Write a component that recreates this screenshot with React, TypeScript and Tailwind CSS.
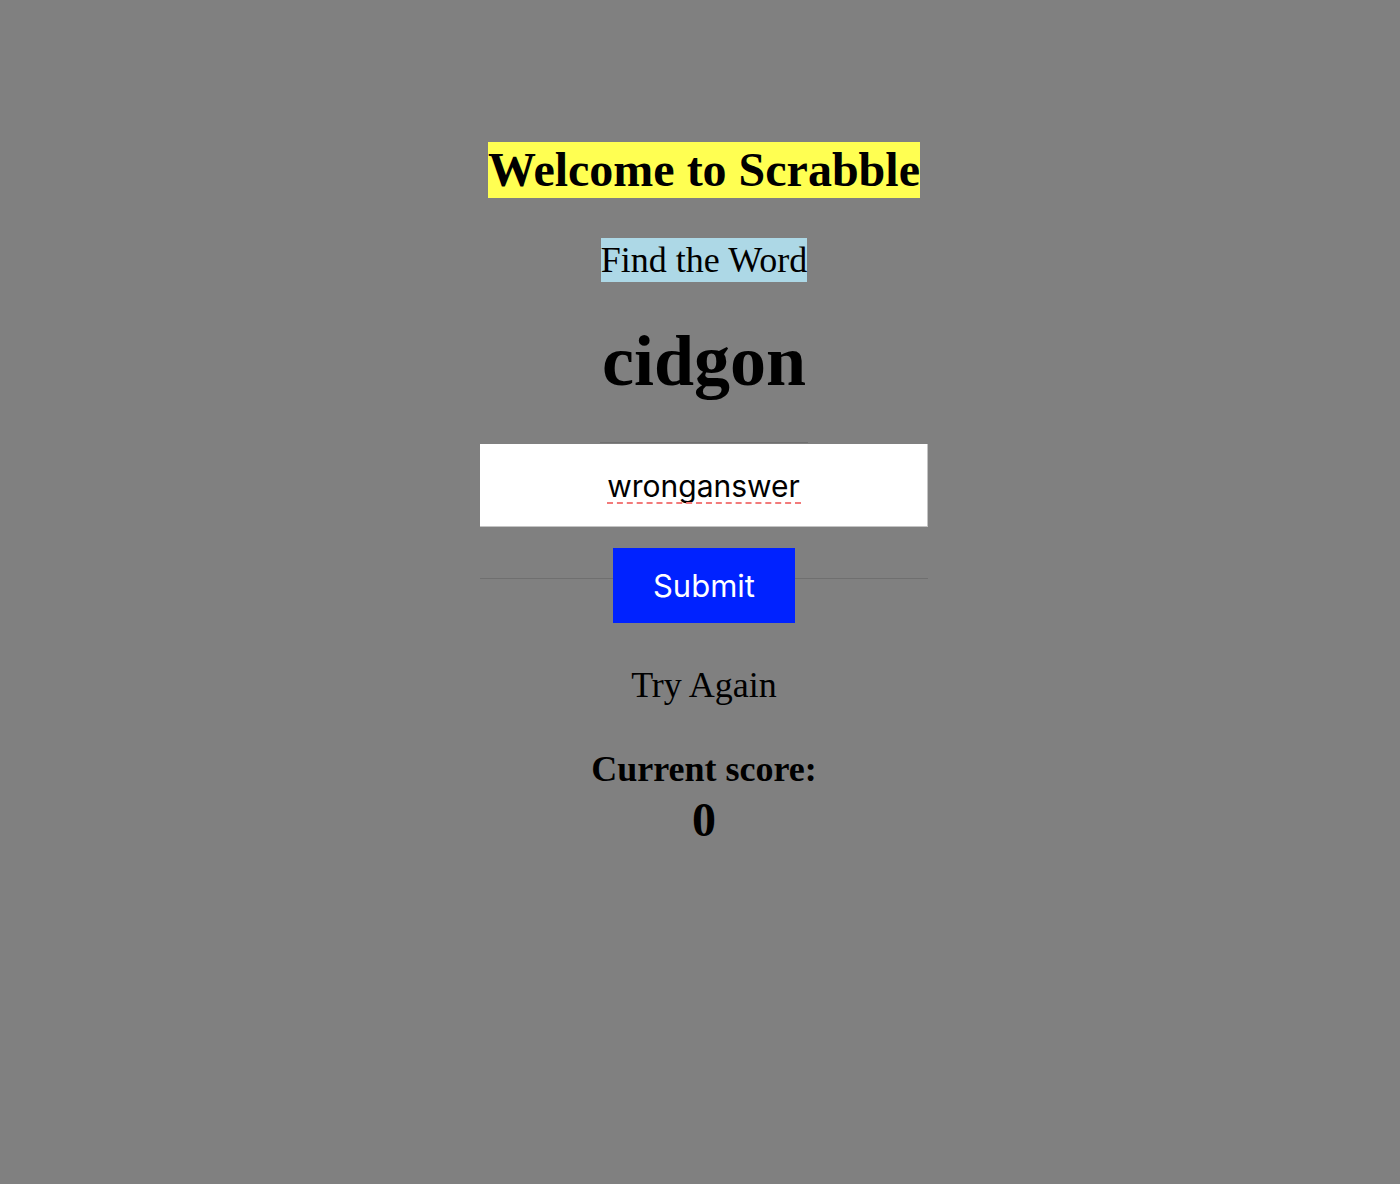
import { useState } from "react";

const serif = "font-['Liberation_Serif','Times_New_Roman',serif]";
const sans = "font-['Inter','Liberation_Sans',sans-serif]";

/**
 * @name App
 * @description Scrabble word guessing screen
 */
export default function App() {
    const [guess, setGuess] = useState("wronganswer");

    return (
        <div className={`min-h-[1184px] w-full bg-[#808080] pl-[8px] text-black ${serif}`}>
            <div className="flex flex-col items-center pt-[142px]">
                <h1 className="bg-[#ffff52] text-[48px] font-bold leading-[56px]">Welcome to Scrabble</h1>
                <h2 className="mt-[40px] bg-[#add8e6] text-[36px] font-normal leading-[44px]">Find the Word</h2>
                <div className="mt-[43px] text-[72px] font-bold leading-[72px]">cidgon</div>

                <div className="mt-[45px] h-px w-[208px] bg-[#6f6f6f]" />
                <form
                    className="mt-px flex w-[448px] flex-col items-center"
                    onSubmit={(e) => e.preventDefault()}
                >
                    <div className="relative w-full">
                        <input
                            className={`h-[83px] w-full border-r border-b border-[#c4c4c4] bg-white pt-px text-center text-[30px] outline-none ${sans}`}
                            onChange={(e) => setGuess(e.target.value)}
                            spellCheck={false}
                            type="text"
                            value={guess}
                        />
                        {/* spellcheck squiggle under the misspelt word */}
                        <div className="pointer-events-none absolute top-[58px] left-[127px] w-[194px] border-t-2 border-dashed border-[#f27a7a]" />
                    </div>
                    <div className="mt-[21px] flex w-full items-start">
                        <div className="mt-[30px] h-px flex-1 bg-[#6f6f6f]" />
                        <button
                            className={`h-[75px] w-[182px] bg-[#0022ff] pt-px text-[31px] text-white ${sans}`}
                            type="submit"
                        >
                            Submit
                        </button>
                        <div className="mt-[30px] h-px flex-1 bg-[#6f6f6f]" />
                    </div>
                </form>

                <p className="mt-[40px] text-[36px] leading-[44px]">Try Again</p>
                <h3 className="mt-[40px] text-[36px] font-bold leading-[44px]">Current score:</h3>
                <div className="mt-[5px] text-[48px] font-bold leading-[48px]">0</div>
            </div>
        </div>
    );
}
